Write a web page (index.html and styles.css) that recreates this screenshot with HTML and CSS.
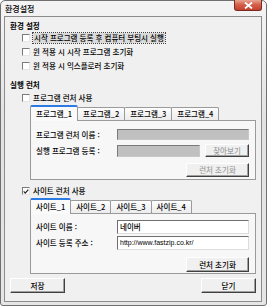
FILE: index.html
```html
<!DOCTYPE html>
<html lang="ko">

<head>
    <meta charset="UTF-8">
    <meta name="viewport" content="width=device-width, initial-scale=1.0">
    <title>환경설정</title>
    <link rel="stylesheet" href="styles.css">
</head>

<body>
    <div class="window">
        <div class="titlebar">
            <span class="title">환경설정</span>
            <span class="close">
                <svg width="9" height="7" viewBox="0 0 9 7">
                    <path d="M1 0.5 L8 6.5 M8 0.5 L1 6.5" stroke="#fff" stroke-width="1.8" />
                </svg>
            </span>
        </div>

        <div class="client">
            <div class="group-title">환경 설정</div>
            <label class="check-row">
                <span class="box"></span>
                <span class="focus">시작 프로그램 등록 후 컴퓨터 부팅시 실행</span>
            </label>
            <label class="check-row">
                <span class="box"></span>
                <span>윈 적용 시 시작 프로그램 초기화</span>
            </label>
            <label class="check-row">
                <span class="box"></span>
                <span>윈 적용 시 익스플로러 초기화</span>
            </label>

            <div class="group-title second">실행 런처</div>
            <label class="check-row tight">
                <span class="box"></span>
                <span>프로그램 런처 사용</span>
            </label>

            <div class="tabs">
                <div class="tab active">프로그램_1</div>
                <div class="tab">프로그램_2</div>
                <div class="tab">프로그램_3</div>
                <div class="tab">프로그램_4</div>
            </div>
            <div class="panel panel-program">
                <div class="field">
                    <span class="field-label">프로그램 런처 이름 :</span>
                    <span class="input disabled"></span>
                </div>
                <div class="field field-browse">
                    <span class="field-label">실행 프로그램 등록 :</span>
                    <span class="input disabled"></span>
                    <button class="btn btn-browse" disabled>찾아보기</button>
                </div>
                <div class="panel-actions">
                    <button class="btn btn-reset" disabled>런처 초기화</button>
                </div>
            </div>

            <label class="check-row site-check">
                <span class="box checked">
                    <svg width="7" height="7" viewBox="0 0 7 7">
                        <path d="M0.8 3.4 L2.6 5.3 L6.2 1.2" fill="none" stroke="#222" stroke-width="1.4" />
                    </svg>
                </span>
                <span>사이트 런처 사용</span>
            </label>

            <div class="tabs">
                <div class="tab active">사이트_1</div>
                <div class="tab">사이트_2</div>
                <div class="tab">사이트_3</div>
                <div class="tab">사이트_4</div>
            </div>
            <div class="panel panel-site">
                <div class="field">
                    <span class="field-label">사이트 이름 :</span>
                    <span class="input">네이버</span>
                </div>
                <div class="field">
                    <span class="field-label">사이트 등록 주소 :</span>
                    <span class="input url">http://www.fastzip.co.kr/</span>
                </div>
                <div class="panel-actions">
                    <button class="btn btn-reset">런처 초기화</button>
                </div>
            </div>

            <div class="footer">
                <button class="btn btn-footer">저장</button>
                <button class="btn btn-footer">닫기</button>
            </div>
        </div>
    </div>
</body>

</html>
```

FILE: styles.css
```css
* {
    box-sizing: border-box;
}

body {
    margin: 0;
    background: #fff;
    font-family: "Noto Sans CJK KR", "Noto Sans", sans-serif;
    font-size: 7.5px;
    font-weight: 500;
    color: #000;
}

.window {
    width: 267px;
    height: 306px;
    border: 1px solid #707070;
    border-radius: 5px 5px 3px 3px;
    background: linear-gradient(#f4f4f4, #e2e2e2 40%, #e6e6e6);
    display: flex;
    flex-direction: column;
}

.titlebar {
    height: 15px;
    display: flex;
    justify-content: space-between;
    align-items: flex-start;
}

.title {
    padding: 3px 0 0 4px;
    line-height: 10px;
    font-size: 8px;
}

.close {
    width: 28px;
    height: 11px;
    margin-right: 4px;
    margin-top: -1px;
    border: 1px solid #7a2a22;
    border-top: none;
    border-radius: 0 0 3px 3px;
    background: linear-gradient(#e8a593, #d5614b 45%, #c3402c);
    display: flex;
    align-items: center;
    justify-content: center;
}

.client {
    flex: 1;
    margin: 0 4px 3px 3px;
    border: 1px solid #8c8c8c;
    background: #f0f0f0;
    display: flex;
    flex-direction: column;
    padding: 0 5px;
}

.group-title {
    margin: 4px 0 0 0;
    height: 10px;
    line-height: 10px;
    font-weight: bold;
}

.group-title.second {
    margin-top: 7px;
}

.check-row {
    height: 14px;
    display: flex;
    align-items: center;
    gap: 3px;
    padding-left: 12px;
    line-height: 10px;
}

.check-row.tight {
    margin-top: 1px;
}

.check-row.site-check {
    margin-top: 4px;
}

.box {
    width: 8px;
    height: 8px;
    border: 1px solid;
    border-color: #7a7a7a #e6e6e6 #e6e6e6 #7a7a7a;
    background: #fff;
    display: flex;
    align-items: center;
    justify-content: center;
}

.focus {
    background: #dadada;
    outline: 1px dotted #444;
    padding: 0 1px;
}

.tabs {
    display: flex;
    align-items: flex-end;
    height: 15px;
    margin-left: 20px;
}

.tab {
    height: 13px;
    line-height: 11px;
    padding: 0 5px;
    border: 1px solid #9a9a9a;
    border-bottom: none;
    border-radius: 2px 2px 0 0;
    background: linear-gradient(#fdfdfd, #ececec);
    margin-left: -1px;
}

.tab.active {
    line-height: 13px;
    background: #fafafa;
    border-top: 2px solid #2c7be5;
    position: relative;
    z-index: 1;
    margin-bottom: -1px;
    height: 16px;
    margin-left: 0;
}

.panel {
    margin-left: 20px;
    margin-right: 0;
    border: 1px solid #9a9a9a;
    background: #f7f7f7;
    padding: 0 6px 0 5px;
    display: flex;
    flex-direction: column;
}

.panel-program {
    height: 60px;
    padding-top: 8px;
}

.panel-site {
    height: 61px;
    padding-top: 6px;
}

.field {
    display: flex;
    align-items: center;
    gap: 5px;
}

.field-label {
    width: 76px;
    line-height: 10px;
}

.input {
    flex: 1;
    height: 14px;
    line-height: 12px;
    border: 1px solid;
    border-color: #6e6e6e #dcdcdc #dcdcdc #6e6e6e;
    background: #fff;
    padding: 0 2px;
}

.url {
    font-family: "Liberation Sans", sans-serif;
    font-size: 7px;
    font-weight: normal;
}

.input.disabled {
    background: #c0c0c0;
    border-color: #7a7a7a #c8c8c8 #c8c8c8 #7a7a7a;
}

.panel-program .field .input {
    height: 11px;
}

.panel-program .field-browse {
    margin-top: 4px;
}

.panel-program .field-browse .input {
    height: 12px;
}

.panel-site .field + .field {
    margin-top: 2px;
}

.btn {
    font-family: inherit;
    font-size: 7.5px;
    font-weight: 500;
    color: #000;
    background: #f0f0f0;
    border: 1px solid;
    border-color: #fff #404040 #404040 #fff;
    box-shadow: inset -1px -1px #a0a0a0;
    padding: 0;
    line-height: 10px;
}

.btn:disabled {
    color: #a0a0a0;
}

.btn-browse {
    width: 44px;
    height: 13px;
}

.panel-actions {
    display: flex;
    justify-content: flex-end;
    margin-top: 6px;
}

.panel-site .panel-actions {
    margin-top: 7px;
}

.btn-reset {
    width: 63px;
    height: 14px;
}

.panel-site .btn-reset {
    height: 15px;
}

.footer {
    display: flex;
    justify-content: space-between;
    margin-top: 4px;
}

.btn-footer {
    width: 55px;
    height: 15px;
}
```
